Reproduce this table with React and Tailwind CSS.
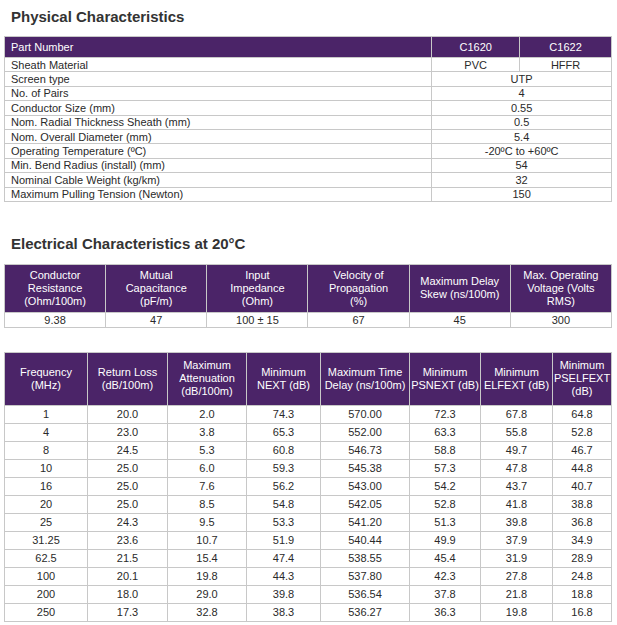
import React from "react";

const P = "bg-[#4b2468]";
const B = "border border-[#c8c8c8]";

const phys = [
  ["Sheath Material", "PVC", "HFFR"],
  ["Screen type", "UTP"],
  ["No. of Pairs", "4"],
  ["Conductor Size (mm)", "0.55"],
  ["Nom. Radial Thickness Sheath (mm)", "0.5"],
  ["Nom. Overall Diameter (mm)", "5.4"],
  ["Operating Temperature (ºC)", "-20ºC to +60ºC"],
  ["Min. Bend Radius (install) (mm)", "54"],
  ["Nominal Cable Weight (kg/km)", "32"],
  ["Maximum Pulling Tension (Newton)", "150"],
];

const elecHead = [
  ["Conductor", "Resistance", "(Ohm/100m)"],
  ["Mutual", "Capacitance", "(pF/m)"],
  ["Input", "Impedance", "(Ohm)"],
  ["Velocity of", "Propagation", "(%)"],
  ["Maximum Delay", "Skew (ns/100m)"],
  ["Max. Operating", "Voltage (Volts", "RMS)"],
];
const elecVals = ["9.38", "47", "100 ± 15", "67", "45", "300"];

const freqHead = [
  { w: 83, l: ["Frequency", "(MHz)"] },
  { w: 80, l: ["Return Loss", "(dB/100m)"] },
  { w: 79, l: ["Maximum", "Attenuation", "(dB/100m)"] },
  { w: 74, l: ["Minimum", "NEXT (dB)"] },
  { w: 89, l: ["Maximum Time", "Delay (ns/100m)"] },
  { w: 71, l: ["Minimum", "PSNEXT (dB)"] },
  { w: 72, l: ["Minimum", "ELFEXT (dB)"] },
  { w: 59, l: ["Minimum", "PSELFEXT", "(dB)"] },
];

const freqRows = [
  ["1", "20.0", "2.0", "74.3", "570.00", "72.3", "67.8", "64.8"],
  ["4", "23.0", "3.8", "65.3", "552.00", "63.3", "55.8", "52.8"],
  ["8", "24.5", "5.3", "60.8", "546.73", "58.8", "49.7", "46.7"],
  ["10", "25.0", "6.0", "59.3", "545.38", "57.3", "47.8", "44.8"],
  ["16", "25.0", "7.6", "56.2", "543.00", "54.2", "43.7", "40.7"],
  ["20", "25.0", "8.5", "54.8", "542.05", "52.8", "41.8", "38.8"],
  ["25", "24.3", "9.5", "53.3", "541.20", "51.3", "39.8", "36.8"],
  ["31.25", "23.6", "10.7", "51.9", "540.44", "49.9", "37.9", "34.9"],
  ["62.5", "21.5", "15.4", "47.4", "538.55", "45.4", "31.9", "28.9"],
  ["100", "20.1", "19.8", "44.3", "537.80", "42.3", "27.8", "24.8"],
  ["200", "18.0", "29.0", "39.8", "536.54", "37.8", "21.8", "18.8"],
  ["250", "17.3", "32.8", "38.3", "536.27", "36.3", "19.8", "16.8"],
];

export default function App() {
  return (
    <div
      className="w-[617px] h-[625px] bg-white text-[#2a2a2a] overflow-hidden"
      style={{ fontFamily: '"Liberation Sans", Arial, sans-serif' }}
    >
      <h2 className="pl-[11px] pt-[8px] h-[36px] text-[15px] leading-[18px] font-bold text-[#333]">
        Physical Characteristics
      </h2>
      <table className="ml-[4px] w-[608px] border-collapse text-[11px] leading-[12px]">
        <colgroup>
          <col className="w-[428px]" />
          <col className="w-[88px]" />
          <col className="w-[92px]" />
        </colgroup>
        <thead>
          <tr className={`${P} text-white h-[21px]`}>
            <th className={`${B} text-left font-normal pl-[6px]`}>Part Number</th>
            <th className={`${B} font-normal`}>C1620</th>
            <th className={`${B} font-normal`}>C1622</th>
          </tr>
        </thead>
        <tbody>
          {phys.map((r, i) => (
            <tr key={i} className="h-[14.4px]">
              <td className={`${B} pl-[6px] py-0`}>{r[0]}</td>
              {r.length === 3 ? (
                <>
                  <td className={`${B} text-center py-0`}>{r[1]}</td>
                  <td className={`${B} text-center py-0`}>{r[2]}</td>
                </>
              ) : (
                <td colSpan={2} className={`${B} text-center py-0`}>
                  {r[1]}
                </td>
              )}
            </tr>
          ))}
        </tbody>
      </table>

      <h2 className="pl-[11px] pt-[33px] h-[62px] text-[15px] leading-[18px] font-bold text-[#333]">
        Electrical Characteristics at 20°C
      </h2>
      <table className="ml-[4px] w-[608px] border-collapse table-fixed text-[11px] leading-[13px]">
        <thead>
          <tr className={`${P} text-white h-[48px]`}>
            {elecHead.map((h, i) => (
              <th key={i} className={`${B} font-normal text-center`}>
                {h.map((l, j) => (
                  <div key={j}>{l}</div>
                ))}
              </th>
            ))}
          </tr>
        </thead>
        <tbody>
          <tr className="h-[15px]">
            {elecVals.map((v, i) => (
              <td key={i} className={`${B} text-center py-0 leading-[12px]`}>
                {v}
              </td>
            ))}
          </tr>
        </tbody>
      </table>

      <div className="h-[24px]" />
      <table className="ml-[4px] w-[608px] border-collapse text-[11px] leading-[13px]">
        <colgroup>
          {freqHead.map((h, i) => (
            <col key={i} style={{ width: h.w }} />
          ))}
        </colgroup>
        <thead>
          <tr className={`${P} text-white h-[53px]`}>
            {freqHead.map((h, i) => (
              <th key={i} className={`${B} font-normal text-center px-0`}>
                {h.l.map((l, j) => (
                  <div key={j}>{l}</div>
                ))}
              </th>
            ))}
          </tr>
        </thead>
        <tbody>
          {freqRows.map((r, i) => (
            <tr key={i} className="h-[18px]">
              {r.map((v, j) => (
                <td key={j} className={`${B} text-center py-0`}>
                  {v}
                </td>
              ))}
            </tr>
          ))}
        </tbody>
      </table>
    </div>
  );
}
